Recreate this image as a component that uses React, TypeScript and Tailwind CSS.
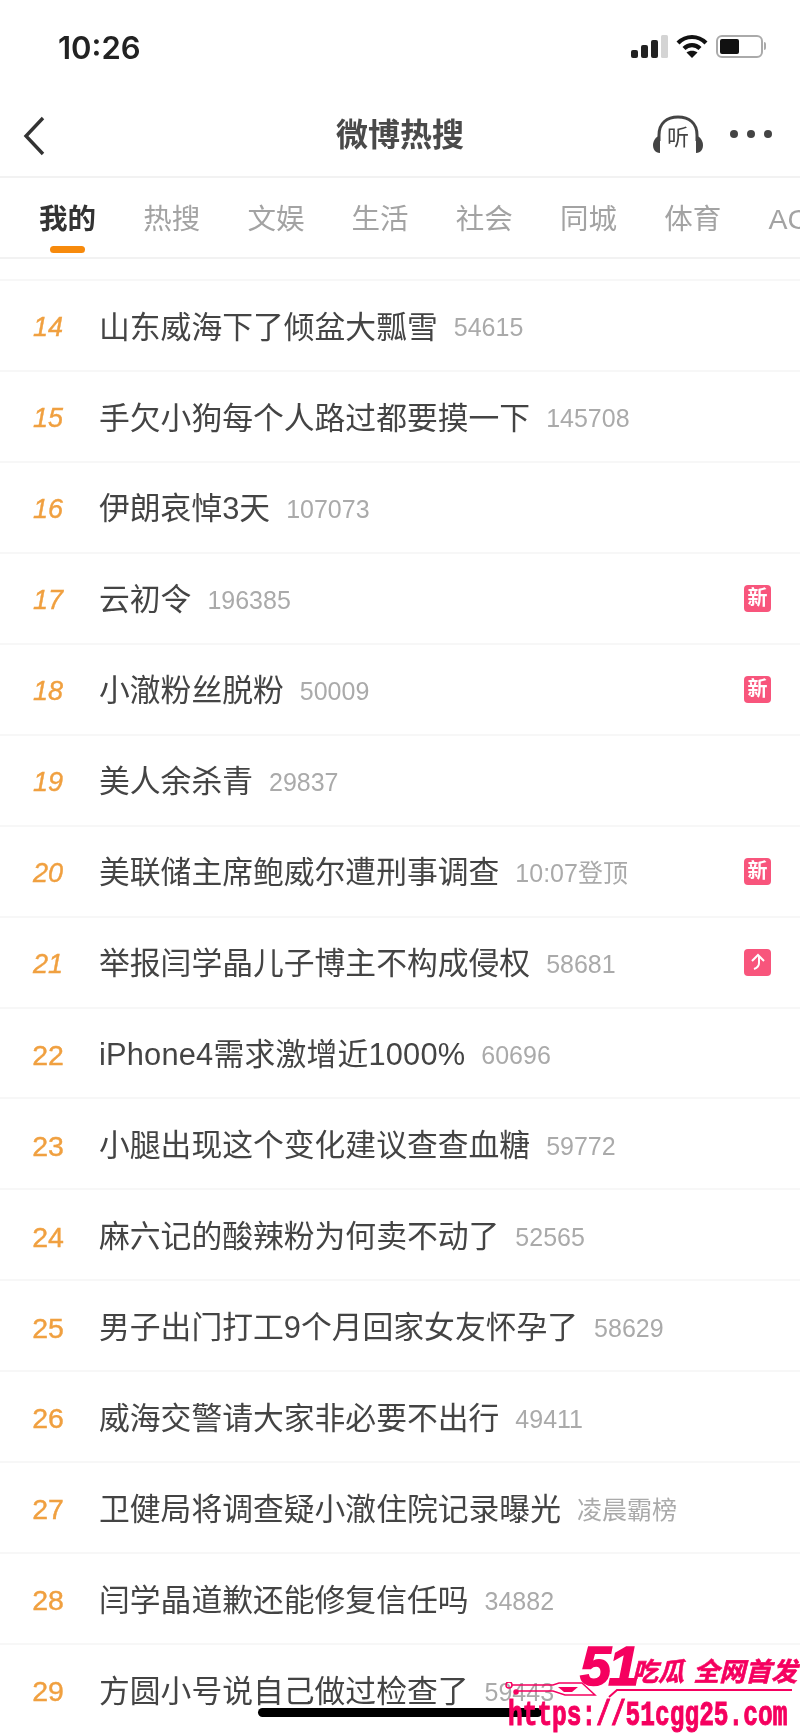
const rows: { n: number; t: string; s: string; b?: string; c?: string }[] = [
  { n: 14, t: "山东威海下了倾盆大瓢雪", s: "54615" },
  { n: 15, t: "手欠小狗每个人路过都要摸一下", s: "145708" },
  { n: 16, t: "伊朗哀悼3天", s: "107073" },
  { n: 17, t: "云初令", s: "196385", b: "新" },
  { n: 18, t: "小澈粉丝脱粉", s: "50009", b: "新" },
  { n: 19, t: "美人余杀青", s: "29837" },
  { n: 20, t: "美联储主席鲍威尔遭刑事调查", s: "10:07登顶", b: "新" },
  { n: 21, t: "举报闫学晶儿子博主不构成侵权", s: "58681", b: "up" },
  { n: 22, t: "iPhone4需求激增近1000%", s: "60696" },
  { n: 23, t: "小腿出现这个变化建议查查血糖", s: "59772" },
  { n: 24, t: "麻六记的酸辣粉为何卖不动了", s: "52565" },
  { n: 25, t: "男子出门打工9个月回家女友怀孕了", s: "58629" },
  { n: 26, t: "威海交警请大家非必要不出行", s: "49411" },
  { n: 27, t: "卫健局将调查疑小澈住院记录曝光", s: "凌晨霸榜" },
  { n: 28, t: "闫学晶道歉还能修复信任吗", s: "34882" },
  { n: 29, t: "方圆小号说自己做过检查了", s: "59443" },
];
const tabs = ["我的", "热搜", "文娱", "生活", "社会", "同城", "体育", "AC"];

export default function App() {
  return (
    <div className="relative w-[800px] h-[1733px] overflow-hidden bg-white font-['Liberation_Sans','Noto_Sans_CJK_SC',sans-serif] blur-[0.6px]">
      <div className="h-[90px] flex items-center justify-between pl-[58px] pr-[34px] pt-[4px]">
        <span className="text-[31px] font-semibold text-[#222] font-['Inter',sans-serif] leading-none">10:26</span>
        <div className="flex items-center gap-[8px] mt-[-2px]">
          <svg width="38" height="24" viewBox="0 0 38 24">
            <rect x="1" y="16" width="7" height="8" rx="2" fill="#222" />
            <rect x="11" y="11" width="7" height="13" rx="2" fill="#222" />
            <rect x="21" y="6" width="7" height="18" rx="2" fill="#222" />
            <rect x="31" y="1" width="7" height="23" rx="1.5" fill="#d4d4d4" />
          </svg>
          <svg width="32" height="24" viewBox="0 0 32 24" fill="none" stroke="#111" strokeWidth="4.2">
            <path d="M2 9C10 1 22 1 30 9" />
            <path d="M8 14.5C12.5 10 19.5 10 24 14.5" />
            <path d="M16 24l-5.5-5.5c3-2.5 8-2.5 11 0z" fill="#111" stroke="none" />
          </svg>
          <div className="flex items-center">
            <div className="w-[47px] h-[23px] rounded-[6px] border-2 border-[#aaa] p-[2px]">
              <div className="w-[19px] h-full rounded-[2px] bg-[#111]" />
            </div>
            <div className="w-[2px] h-[8px] ml-[1px] bg-[#aaa] rounded-r" />
          </div>
        </div>
      </div>
      <div className="relative h-[88px] flex items-center justify-center border-b-2 border-[#f2f2f2]">
        <svg className="absolute left-[22px] top-[26px]" width="24" height="40" viewBox="0 0 24 40" fill="none" stroke="#333" strokeWidth="3.4">
          <path d="M21 2L4 20l17 18" />
        </svg>
        <span className="text-[32px] font-bold text-[#4a4a4a] leading-none mt-[3px]">微博热搜</span>
        <div className="absolute left-[652px] top-[25px] w-[52px] h-[39px] flex items-center justify-center">
          <svg className="absolute inset-0" width="52" height="39" viewBox="0 0 52 39" fill="none">
            <path d="M7 26V20C7 8 15 2 26 2s19 6 19 18v6" stroke="#444" strokeWidth="3" />
            <path d="M8 21v17C3 38 1 34 1 30s3-9 7-9z" fill="#444" />
            <path d="M44 21v17c5 0 7-4 7-8s-3-9-7-9z" fill="#444" />
          </svg>
          <span className="text-[22px] text-[#444] leading-none mt-[7px]">听</span>
        </div>
        <div className="absolute left-[730px] top-[40px] flex gap-[9px]">
          <span className="w-[8px] h-[8px] rounded-full bg-[#444]" />
          <span className="w-[8px] h-[8px] rounded-full bg-[#444]" />
          <span className="w-[8px] h-[8px] rounded-full bg-[#444]" />
        </div>
      </div>
      <div className="relative h-[81px] border-b-2 border-[#f2f2f2] flex pl-[39px] gap-[47.2px] pt-[23px] overflow-hidden">
        {tabs.map((t, i) => (
          <span key={t} className={"shrink-0 text-[28.5px] leading-[36px] " + (i === 0 ? "font-bold text-[#333]" : "text-[#a3a3a3]")}>{t}</span>
        ))}
        <div className="absolute left-[50px] top-[68px] w-[35px] h-[7px] rounded-full bg-[#f78a0c]" />
      </div>
      <div className="mt-[20px] border-t-2 border-[#f7f7f7]">
        {rows.map((r) => (
          <div key={r.n} className="h-[90.95px] flex items-center border-b-2 border-[#f7f7f7]">
            <span className={"w-[99px] pr-[3px] mt-[4px] leading-none text-center shrink-0 text-[#f0a040] [-webkit-text-stroke:0.4px_#f0a040] " + (r.n < 22 ? "text-[27px] italic" : "text-[28.5px]")}>{r.n}</span>
            <span className={"text-[30.8px] mt-[5px] text-[#444] leading-none whitespace-nowrap " + (r.n === 22 ? "tracking-[0.2px]" : "")}>{r.t}</span>
            <span className="ml-[16px] mt-[5px] text-[25px] text-[#aaa] leading-none whitespace-nowrap">{r.s}</span>
            {r.b && (
              <span className="ml-auto mr-[29px] w-[27px] h-[27px] rounded-[4px] bg-[#f8557c] flex items-center justify-center text-white text-[20px] font-bold leading-none">
                {r.b === "up" ? (
                  <svg width="20" height="20" viewBox="0 0 20 20" fill="none" stroke="#fff" strokeWidth="2">
                    <path d="M4 9l6-6 6 6M11 4v7c0 3-2 5-5 6" />
                  </svg>
                ) : r.b}
              </span>
            )}
          </div>
        ))}
      </div>
      <div className="absolute left-[258px] top-[1708px] w-[284px] h-[9px] rounded-full bg-black" />
      <div className="absolute left-[505px] top-[1636px] w-[295px] h-[97px] text-[#f5005f]">
        <div className="absolute left-[75px] top-[2px] text-[56px] font-bold italic leading-none font-['Liberation_Sans',sans-serif] tracking-[-3px] [-webkit-text-stroke:1.5px_#f5005f]">51</div>
        <div className="absolute left-[127px] top-[23px] text-[26px] font-bold italic leading-none whitespace-nowrap [word-spacing:2px] [-webkit-text-stroke:0.6px_#f5005f]">吃瓜 全网首发</div>
        <svg className="absolute left-0 top-[46px]" width="295" height="16" viewBox="0 0 295 16" fill="none" stroke="#f5005f" strokeWidth="1.5">
          <circle cx="4" cy="3" r="3" />
          <circle cx="11" cy="10" r="2" fill="#f5005f" />
          <path d="M7 3h41l6-2h23l13 12H60l-12-4H13" />
          <path d="M53 5h20l-6 5H59z" fill="#f5005f" stroke="none" />
          <path d="M104 15l8-7h175" strokeWidth="2" />
        </svg>
        <div className="absolute left-[3px] top-[63px] w-[400px] origin-left scale-x-[0.7] text-[35px] font-bold leading-none whitespace-nowrap font-['Liberation_Mono',monospace] [-webkit-text-stroke:1px_#f5005f]">https://51cgg25.com</div>
      </div>
    </div>
  );
}
